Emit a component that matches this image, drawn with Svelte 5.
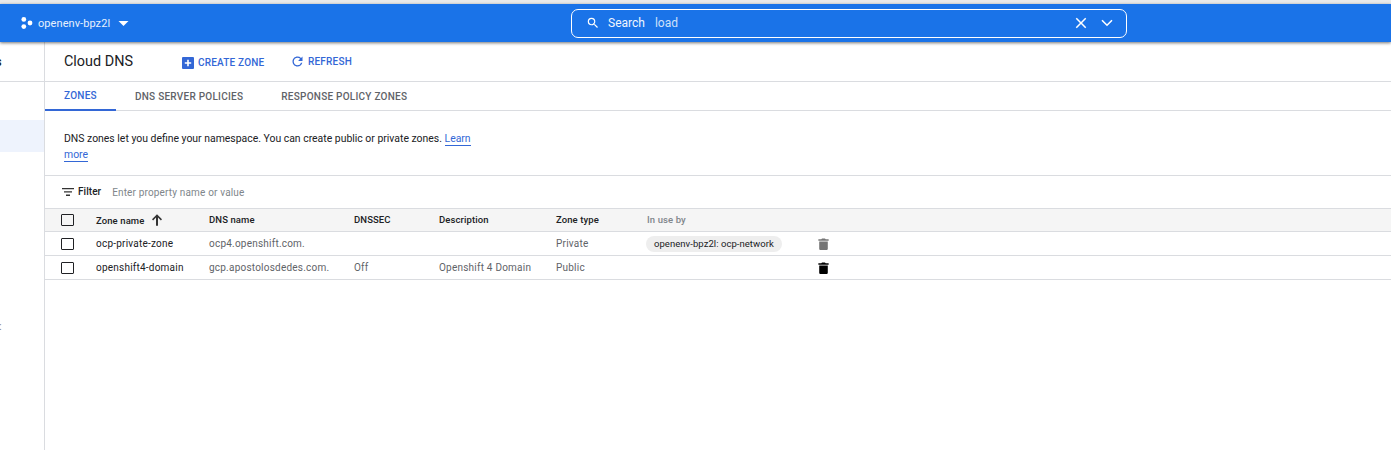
<script>
  const rows = [
    { name: 'ocp-private-zone', dns: 'ocp4.openshift.com.', sec: '', desc: '', type: 'Private', used: 'openenv-bpz2l: ocp-network', dim: true },
    { name: 'openshift4-domain', dns: 'gcp.apostolosdedes.com.', sec: 'Off', desc: 'Openshift 4 Domain', type: 'Public', used: '', dim: false }
  ];
</script>

<div class="page">
  <div class="strip"></div>
  <header class="topbar">
    <div class="project">
      <svg class="hex" viewBox="0 0 12 12" width="12" height="12" fill="#fff">
        <circle cx="2.8" cy="2.4" r="2.4" />
        <circle cx="2.8" cy="9.6" r="2.4" />
        <circle cx="9" cy="6" r="2.4" />
      </svg>
      <span>openenv-bpz2l</span>
      <svg class="caret" viewBox="0 0 10 5" width="11" height="5" fill="#fff"><path d="M0 0h10L5 5z" /></svg>
    </div>
    <div class="search">
      <svg viewBox="0 0 24 24" width="14" height="14" fill="#fff"><path d="M15.5 14h-.79l-.28-.27A6.47 6.47 0 0 0 16 9.5 6.5 6.5 0 1 0 9.5 16c1.61 0 3.09-.59 4.23-1.57l.27.28v.79l5 4.99L20.49 19l-4.99-5zm-6 0C7.01 14 5 11.99 5 9.5S7.01 5 9.5 5 14 7.01 14 9.5 11.99 14 9.5 14z" /></svg>
      <span class="search-label">Search</span>
      <span class="search-value">load</span>
      <svg class="clear" viewBox="0 0 24 24" width="18" height="18" fill="#fff"><path d="M19 6.41 17.59 5 12 10.59 6.41 5 5 6.41 10.59 12 5 17.59 6.41 19 12 13.41 17.59 19 19 17.59 13.41 12z" /></svg>
      <svg class="chev" viewBox="0 0 12 8" width="12" height="8" fill="none" stroke="#fff" stroke-width="1.6"><path d="M1 1.2l5 5 5-5" /></svg>
    </div>
  </header>

  <div class="body">
    <aside class="side">
      <div class="side-head"><span class="cut">s</span></div>
      <div class="side-active"></div>
      <div class="side-cut"><span class="cut small">:</span></div>
    </aside>

    <main class="main">
      <div class="title-row">
        <h1>Cloud DNS</h1>
        <button class="action create">
          <svg viewBox="0 0 12 12" width="12" height="12"><rect width="12" height="12" rx="1" fill="#3367d6" /><path d="M6 2.8v6.4M2.8 6h6.4" stroke="#fff" stroke-width="1.6" /></svg>
          CREATE ZONE
        </button>
        <button class="action refresh">
          <svg viewBox="0 0 24 24" width="15" height="15" fill="#3367d6"><path d="M17.65 6.35A7.958 7.958 0 0 0 12 4c-4.42 0-7.99 3.58-7.99 8s3.57 8 7.99 8c3.73 0 6.84-2.55 7.73-6h-2.08A5.99 5.99 0 0 1 12 18c-3.31 0-6-2.69-6-6s2.69-6 6-6c1.66 0 3.14.69 4.22 1.78L13 11h7V4l-2.35 2.35z" /></svg>
          REFRESH
        </button>
      </div>

      <nav class="tabs">
        <span class="tab active">ZONES</span>
        <span class="tab second">DNS SERVER POLICIES</span>
        <span class="tab third">RESPONSE POLICY ZONES</span>
      </nav>

      <div class="intro">
        <p>DNS zones let you define your namespace. You can create public or private zones. <a href="#learn">Learn more</a></p>
      </div>

      <div class="filter">
        <svg viewBox="0 0 12 8" width="12" height="8" fill="#333"><path d="M0 0h12v1.3H0zM2 3.300h8v1.300H2zM4 6.600h4v1.300H4z" /></svg>
        <strong>Filter</strong>
        <span>Enter property name or value</span>
      </div>

      <div class="grid head">
        <span class="cell-check"><i class="box"></i></span>
        <span class="zone-head">Zone name
          <svg viewBox="0 0 12 12" width="12" height="12" fill="#333"><path d="M6 .3 1 5.300l1.100 1.100 2.900-2.900v8.200h2V3.500l2.900 2.900L11 5.300z" /></svg>
        </span>
        <span class="head-text">DNS name</span>
        <span class="head-text">DNSSEC</span>
        <span class="head-text">Description</span>
        <span class="head-text">Zone type</span>
        <span class="head-text used-head">In use by</span>
        <span></span>
      </div>
      {#each rows as row}
        <div class="grid row">
          <span class="cell-check"><i class="box"></i></span>
          <span class="name">{row.name}</span>
          <span>{row.dns}</span>
          <span>{row.sec}</span>
          <span>{row.desc}</span>
          <span>{row.type}</span>
          <span>{#if row.used}<em class="chip">{row.used}</em>{/if}</span>
          <span class="trash" class:dim={row.dim}>
            <svg viewBox="0 0 12 14" width="11" height="12" fill="currentColor"><path d="M1 4h10v8.400c0 .9-.7 1.600-1.600 1.600H2.600C1.700 14 1 13.300 1 12.400zM0 1.500h3.400L4.300.5h3.400l.9 1H12V3.200H0z" /></svg>
          </span>
        </div>
      {/each}
    </main>
  </div>
</div>

<style>
  :global(body) {
    margin: 0;
    background: #fff;
  }

  .page {
    height: 450px;
    overflow: hidden;
    display: flex;
    flex-direction: column;
    font-family: Roboto, "Liberation Sans", sans-serif;
    color: #202124;
  }

  .strip {
    height: 4px;
    background: #e9e9e9;
    flex-shrink: 0;
  }

  .topbar {
    height: 38px;
    flex-shrink: 0;
    background: #1a73e8;
    box-shadow: 0 1px 3px rgba(0, 0, 0, 0.55);
    display: flex;
    align-items: center;
    position: relative;
    z-index: 2;
    color: #fff;
  }

  .project {
    display: flex;
    align-items: center;
    margin-left: 21px;
    width: 550px;
    font-size: 11px;
    letter-spacing: 0.07px;
    color: #e6f0fd;
  }

  .project span {
    margin-left: 5px;
  }

  .caret {
    margin-left: 8px;
  }

  .search {
    width: 540px;
    height: 27px;
    border: 1px solid #fff;
    border-radius: 7px;
    display: flex;
    align-items: center;
    font-size: 12px;
    padding-left: 14px;
  }

  .search-label {
    margin-left: 8px;
    color: #f1f6fe;
  }

  .search-value {
    margin-left: 10px;
    color: #cfe0fa;
  }

  .clear {
    margin-left: auto;
  }

  .chev {
    margin: 0 13px 0 11px;
  }

  .body {
    flex: 1;
    display: flex;
    min-height: 0;
  }

  .side {
    width: 44px;
    flex-shrink: 0;
    border-right: 1px solid #dadce0;
    display: flex;
    flex-direction: column;
    overflow: hidden;
  }

  .side-head {
    height: 39px;
    border-bottom: 1px solid #dadce0;
    display: flex;
    align-items: center;
    flex-shrink: 0;
  }

  .cut {
    margin-left: -5px;
    font-size: 13px;
    font-weight: 500;
  }

  .side-active {
    height: 32px;
    margin-top: 38px;
    background: #eef3fd;
    flex-shrink: 0;
  }

  .side-cut {
    margin-top: 167px;
    height: 14px;
    display: flex;
    align-items: center;
  }

  .cut.small {
    margin-left: -1px;
    font-size: 11px;
    color: #80868b;
    font-weight: 400;
  }

  .main {
    flex: 1;
    min-width: 0;
  }

  .title-row {
    height: 39px;
    border-bottom: 1px solid #dadce0;
    display: flex;
    align-items: center;
    padding-left: 19px;
  }

  h1 {
    margin: 1px 0 0;
    font-size: 14.4px;
    font-weight: 400;
    line-height: 1;
    width: 118px;
  }

  .action {
    border: 0;
    background: none;
    padding: 0;
    display: flex;
    align-items: center;
    font: 500 10px Roboto, "Liberation Sans", sans-serif;
    color: #3367d6;
    letter-spacing: 0.2px;
    position: relative;
    top: 1px;
  }

  .create {
    gap: 4px;
    width: 108px;
  }

  .refresh {
    gap: 3px;
    top: 0;
  }

  .tabs {
    height: 28px;
    border-bottom: 1px solid #dadce0;
    display: flex;
    font-size: 10px;
    font-weight: 500;
    color: #5f6368;
    letter-spacing: 0.25px;
  }

  .tab {
    display: flex;
    align-items: center;
    box-sizing: border-box;
  }

  .tab.active {
    width: 71px;
    padding-left: 19px;
    color: #3367d6;
    border-bottom: 2px solid #3367d6;
    height: 29px;
  }

  .second {
    margin-left: 19px;
  }

  .third {
    margin-left: 38px;
  }

  .intro {
    height: 65px;
    border-bottom: 1px solid #dadce0;
    padding: 20px 0 0 19px;
    box-sizing: border-box;
  }

  .intro p {
    margin: 0;
    width: 420px;
    font-size: 10.43px;
    line-height: 16px;
  }

  .intro a {
    color: #3367d6;
    text-decoration: none;
    border-bottom: 1px solid #3367d6;
  }

  .filter {
    height: 32px;
    display: flex;
    align-items: center;
    padding-left: 17px;
    font-size: 10px;
    letter-spacing: 0.05px;
  }

  .filter strong {
    font-weight: 500;
    margin-left: 4px;
    position: relative;
    top: -1px;
  }

  .filter span {
    margin-left: 11px;
    color: #80868b;
    letter-spacing: 0.16px;
  }

  .grid {
    display: grid;
    grid-template-columns: 51px 113px 145px 85px 117px 91px 170px 20px;
    align-items: center;
    box-sizing: border-box;
    font-size: 10px;
    border-bottom: 1px solid #dadce0;
    letter-spacing: 0.22px;
  }

  .head {
    height: 24px;
    background: #f5f5f5;
    border-top: 1px solid #dadce0;
    font-weight: 500;
    font-size: 9.5px;
    letter-spacing: 0.1px;
  }

  .head-text {
    position: relative;
    top: -1px;
  }

  .zone-head {
    display: flex;
    align-items: center;
    gap: 7px;
  }

  .used-head {
    color: #80868b;
  }

  .row {
    height: 24px;
    color: #5f6368;
  }

  .name {
    color: #202124;
  }

  .cell-check {
    padding-left: 16px;
    display: flex;
  }

  .box {
    width: 11px;
    height: 10px;
    border: 1px solid #202124;
    border-radius: 1px;
    display: block;
  }

  .chip {
    display: inline-block;
    font-style: normal;
    font-size: 9.5px;
    letter-spacing: 0.05px;
    line-height: 16px;
    padding: 0 8px;
    margin-left: -1px;
    border-radius: 8px;
    background: #eeeeee;
    color: #202124;
  }

  .trash {
    color: #000;
    display: flex;
    margin-left: 1px;
  }

  .trash.dim {
    color: #757575;
  }
</style>
